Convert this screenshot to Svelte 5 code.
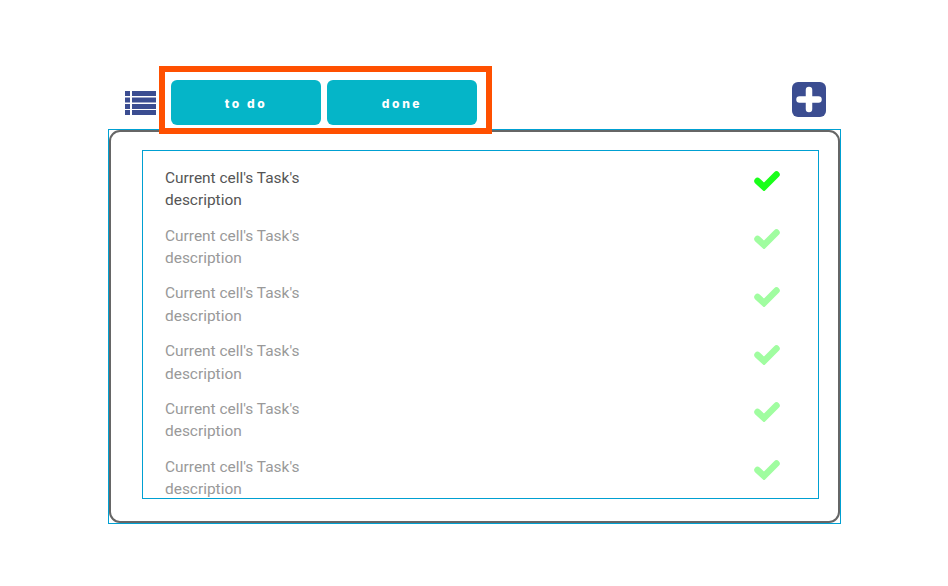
<script>
  const tasks = [1, 2, 3, 4, 5, 6].map((id) => ({ id, text: "Current cell's Task's description", active: id === 1 }));
</script>

<main class="page">
  <header class="toolbar">
    <svg class="list-icon" viewBox="0 0 31 24" aria-hidden="true">
      <g fill="#3b4d91">
        <rect x="0" y="0" width="5" height="5" /><rect x="7" y="0" width="24" height="5" />
        <rect x="0" y="6.5" width="5" height="5" /><rect x="7" y="6.5" width="24" height="5" />
        <rect x="0" y="13" width="5" height="5" /><rect x="7" y="13" width="24" height="5" />
        <rect x="0" y="19" width="5" height="5" /><rect x="7" y="19" width="24" height="5" />
      </g>
    </svg>
    <div class="tabs">
      <button>to do</button>
      <button>done</button>
    </div>
    <svg class="plus-icon" viewBox="0 0 34 35" aria-hidden="true">
      <rect width="34" height="35" rx="6" fill="#3b4d91" />
      <path d="M17 8v19M7.5 17.5h19" stroke="#fff" stroke-width="6.500" stroke-linecap="round" />
    </svg>
  </header>

  <section class="outer">
    <div class="frame">
      <ul class="list">
        {#each tasks as task (task.id)}
          <li class:active={task.active}>
            <p>{task.text}</p>
            <svg class="check" viewBox="0 0 26 20" aria-hidden="true">
              <path d="M3.500 10l6.500 6L22.500 3.500" fill="none" stroke="currentColor" stroke-width="6.500" stroke-linecap="round" stroke-linejoin="miter" />
            </svg>
          </li>
        {/each}
      </ul>
    </div>
  </section>
</main>

<style>
  :global(body) {
    background: #fff;
  }

  .page {
    width: 733px;
    margin-left: 108px;
    padding-top: 66px;
    font-family: "Roboto", "Liberation Sans", sans-serif;
  }

  .toolbar {
    position: relative;
    z-index: 1;
    display: flex;
    align-items: center;
    height: 68px;
    margin-bottom: -5px;
    padding-left: 17px;
  }

  .list-icon {
    width: 31px;
    height: 24px;
    margin: 6px 3px 0 0;
  }

  .tabs {
    display: flex;
    gap: 6px;
    box-sizing: border-box;
    width: 333px;
    height: 68px;
    padding: 8px 9px 3px 6px;
    border: 6px solid #ff5000;
  }

  button {
    width: 150px;
    height: 45px;
    padding: 2px 0 0;
    border: none;
    border-radius: 6px;
    background: #05b5c8;
    color: #fff;
    font-family: "Inter", sans-serif;
    font-size: 12px;
    font-weight: 800;
    letter-spacing: 2.6px;
  }

  .plus-icon {
    width: 34px;
    height: 35px;
    margin: 0 0 2px 300px;
  }

  .outer {
    box-sizing: border-box;
    height: 395px;
    border: 1px solid #00a0d2;
  }

  .frame {
    box-sizing: border-box;
    height: 100%;
    padding: 18px 19px 22px 31px;
    border: 2.5px solid #666;
    border-radius: 11px;
    background: #fff;
  }

  .list {
    box-sizing: border-box;
    height: 349px;
    margin: 0;
    padding: 0;
    overflow: hidden;
    border: 1px solid #00a0d2;
    list-style: none;
  }

  li {
    display: flex;
    justify-content: space-between;
    box-sizing: border-box;
    height: 57.8px;
    padding: 15.8px 38px 0 22px;
    color: #999;
  }

  li.active {
    color: #555;
  }

  p {
    width: 150px;
    margin: 0;
    font-size: 15.45px;
    line-height: 22.500px;
  }

  .check {
    width: 26px;
    height: 20px;
    margin-top: 4.500px;
    color: #a0fda0;
  }

  li.active .check {
    color: #1aff1a;
  }
</style>
